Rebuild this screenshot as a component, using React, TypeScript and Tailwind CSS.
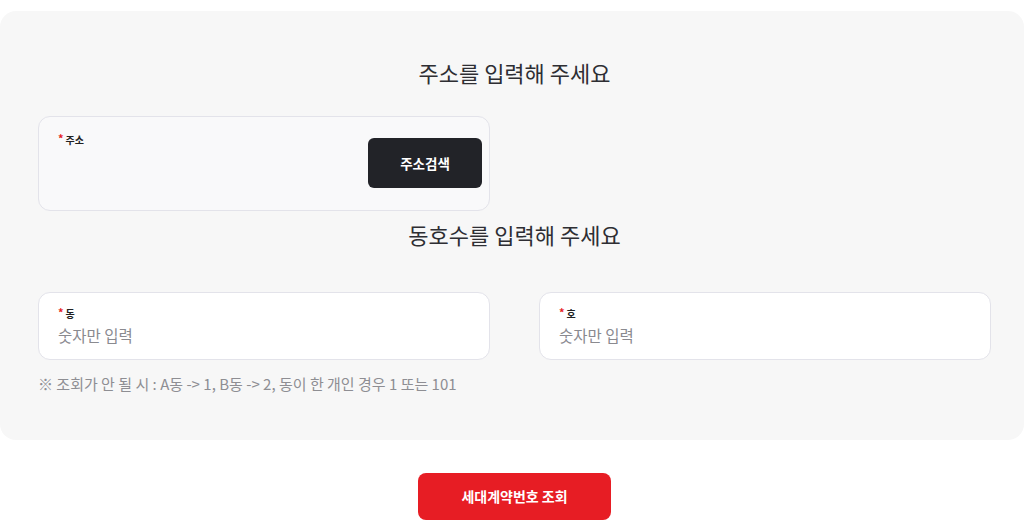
import React from "react";

const font = { fontFamily: '"Noto Sans CJK KR", "Noto Sans", sans-serif' };

function Label({ text }: { text: string }) {
  return (
    <div className="flex items-start text-[10px] font-bold leading-[14px] text-[#222]">
      <span className="mr-[2px] text-[#e61e25] text-[11px] leading-[10px]">*</span>
      <span>{text}</span>
    </div>
  );
}

export default function App() {
  return (
    <div className="w-[1024px] h-[529px] bg-white overflow-hidden" style={font}>
      <div className="mt-[11px] w-[1024px] h-[429px] rounded-2xl bg-[#f7f7f7] pl-[38px] pr-[33px] pt-[48px]">
        <h2 className="text-center text-[22px] leading-[26px] font-normal text-[#2e2e33]">
          주소를 입력해 주세요
        </h2>
        <div className="mt-[31px] w-[452px] h-[95px] rounded-xl border border-[#e3e3ea] bg-[#f9f9fa] pl-[19px] pr-[7px] pt-[15px] flex justify-between">
          <div className="pt-[1px]">
            <Label text="주소" />
          </div>
          <button className="mt-[6px] w-[114px] h-[50px] rounded-md bg-[#222328] text-white text-[13.5px] font-bold">
            주소검색
          </button>
        </div>
        <h2 className="mt-[10px] text-center text-[22px] leading-[26px] font-normal text-[#2e2e33]">
          동호수를 입력해 주세요
        </h2>
        <div className="mt-[45px] grid grid-cols-[452px_452px] gap-x-[49px]">
          {["동", "호"].map((t) => (
            <div
              key={t}
              className="h-[68px] rounded-xl border border-[#e3e3ea] bg-white pl-[19px] pt-[14px]"
            >
              <Label text={t} />
              <div className="mt-[4px] text-[15.5px] leading-[20px] text-[#8a8a8f]">숫자만 입력</div>
            </div>
          ))}
        </div>
        <p className="mt-[15px] text-[15px] leading-[18px] text-[#8e8e93]">
          ※ 조회가 안 될 시 : A동 -&gt; 1, B동 -&gt; 2, 동이 한 개인 경우 1 또는 101
        </p>
      </div>
      <div className="flex justify-center mt-[33px]">
        <button className="ml-[5px] w-[193px] h-[47px] rounded-lg bg-[#e71d24] text-white text-[14px] font-bold">
          세대계약번호 조회
        </button>
      </div>
    </div>
  );
}
